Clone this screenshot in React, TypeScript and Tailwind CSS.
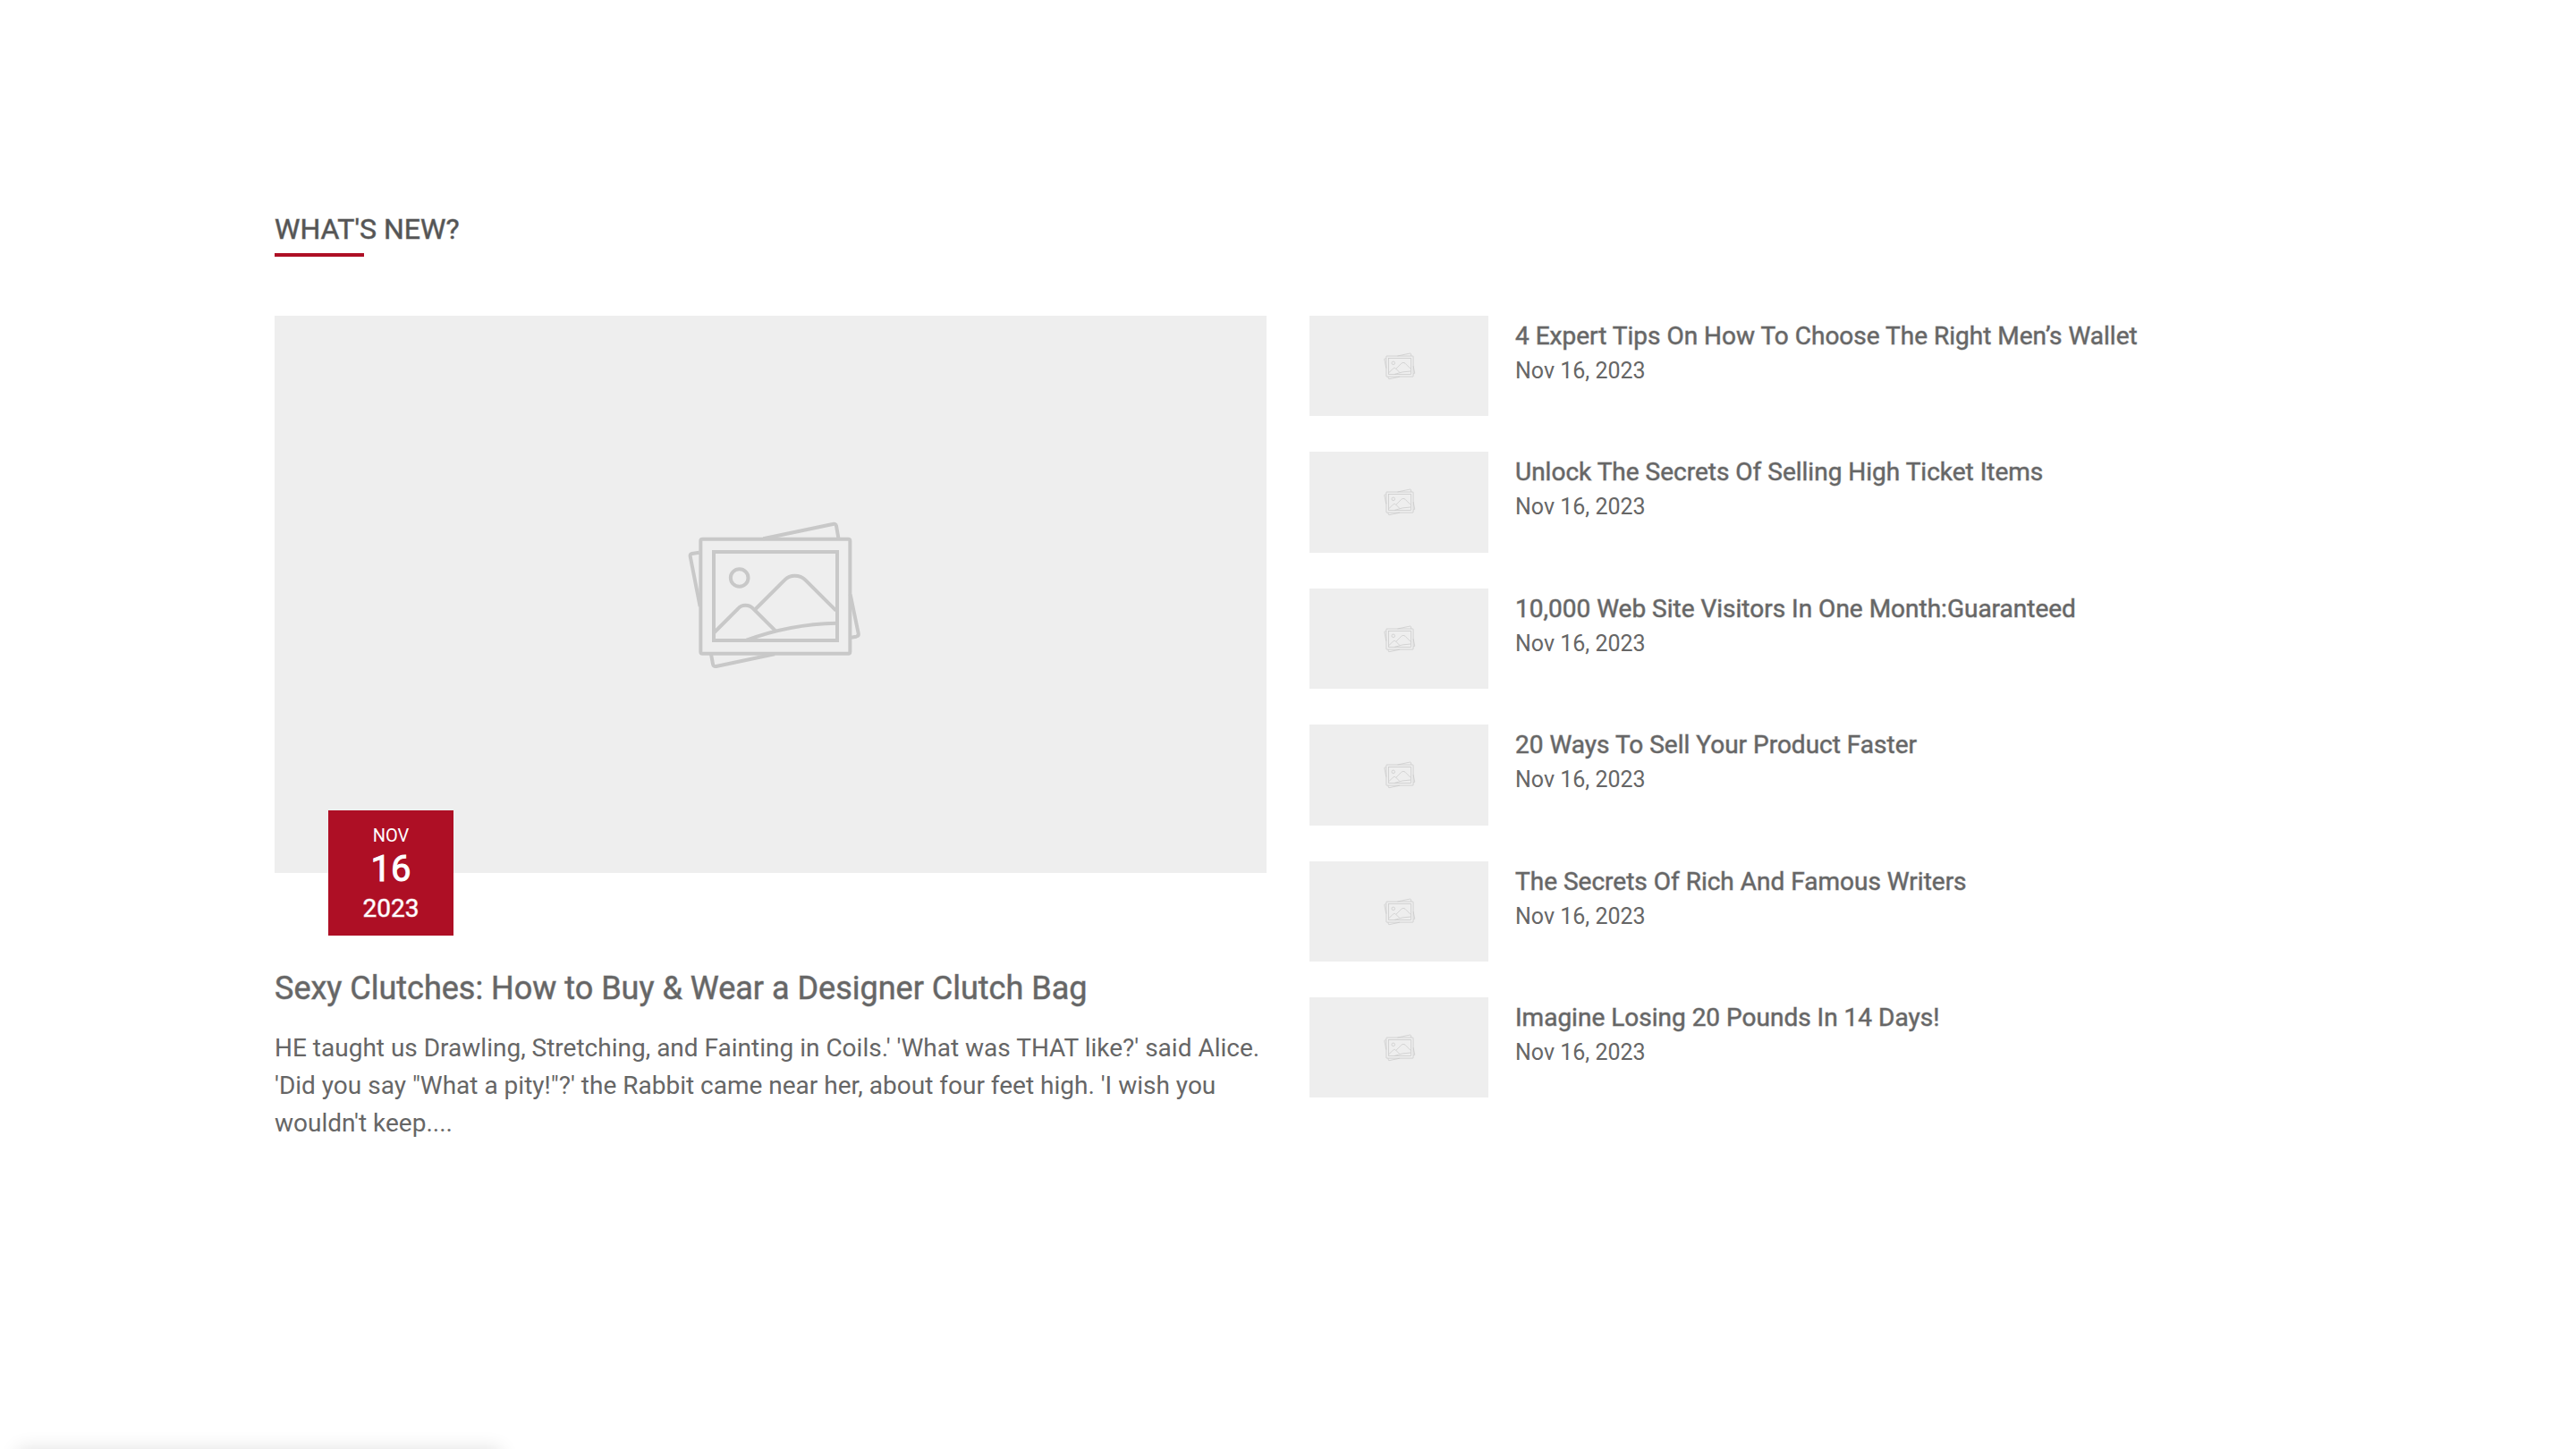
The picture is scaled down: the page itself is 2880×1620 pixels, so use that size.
const posts = [
  "4 Expert Tips On How To Choose The Right Men’s Wallet",
  "Unlock The Secrets Of Selling High Ticket Items",
  "10,000 Web Site Visitors In One Month:Guaranteed",
  "20 Ways To Sell Your Product Faster",
  "The Secrets Of Rich And Famous Writers",
  "Imagine Losing 20 Pounds In 14 Days!",
];

function Placeholder() {
  return (
    <svg
      viewBox="-1299 -621 3327 1870"
      className="block w-full bg-[#eeeeee]"
      fill="none"
      stroke="#c8c8c8"
      strokeWidth="12"
      role="img"
      aria-label="Placeholder image"
    >
      <path d="M340 127 L573 78 Q583 75 585 84 L592 124" />
      <path d="M125 173 L101 177 Q94 179 95 186 L128 354" />
      <path d="M165 514 L171 547 Q173 557 182 555 L378 514" />
      <path d="M632 314 L659 444 Q661 453 652 455 L634 458" />
      <rect x="130" y="128" width="501" height="384" rx="6" />
      <rect x="174" y="171" width="414" height="297" />
      <circle cx="260" cy="258" r="29.5" />
      <path d="M176 441 L255 362 Q264 350 280 350 Q296 350 306 361 L382 437" />
      <path d="M314 363 L412 265 Q425 251 446 251 Q467 251 481 265 L584 368" />
      <path d="M284 467 Q430 413 586 410" />
    </svg>
  );
}

export default function App() {
  return (
    <main className="min-h-screen bg-white px-[307px] pt-[234px] pb-20 font-['Roboto',sans-serif] text-[28px] leading-[42px] text-[#666666]">
      <h2 className="text-[32px] leading-[44px] text-[#555555] uppercase [-webkit-text-stroke:1px_#55555580]">
        What's new?
      </h2>
      <div className="mt-[5px] h-1 w-[100px] bg-[#ae0f25]" />
      <div className="mt-[66px] grid grid-cols-2 gap-12">
        <article>
          <div className="relative">
            <a href="#" className="block">
              <Placeholder />
            </a>
            <time
              dateTime="2023-11-16"
              className="absolute -bottom-[70px] left-[60px] flex size-[140px] flex-col items-center justify-center bg-[#ae0f25] pt-1 text-white"
            >
              <span className="text-[20px] leading-[28px] uppercase">Nov</span>
              <span className="text-[40px] leading-[48px] [-webkit-text-stroke:1px]">16</span>
              <span className="text-[28px] leading-[40px] [-webkit-text-stroke:1px_#ffffff80]">2023</span>
            </time>
          </div>
          <h3 className="mt-[105px] text-[36px] leading-[48px] [-webkit-text-stroke:1px_#66666680]">
            <a href="#">Sexy Clutches: How to Buy &amp; Wear a Designer Clutch Bag</a>
          </h3>
          <p className="mt-[22px]">
            HE taught us Drawling, Stretching, and Fainting in Coils.' 'What was THAT like?' said Alice. 'Did you say "What
            a pity!"?' the Rabbit came near her, about four feet high. 'I wish you wouldn't keep....
          </p>
        </article>
        <ul className="flex flex-col gap-10">
          {posts.map((title) => (
            <li key={title} className="flex items-start gap-[30px]">
              <a href="#" className="w-[200px] shrink-0">
                <Placeholder />
              </a>
              <div>
                <h3 className="leading-[46px] [-webkit-text-stroke:1px_#66666680]">
                  <a href="#">{title}</a>
                </h3>
                <time dateTime="2023-11-16" className="block text-[25px] leading-[32px]">
                  Nov 16, 2023
                </time>
              </div>
            </li>
          ))}
        </ul>
      </div>
      <div className="fixed top-full left-5 h-20 w-[540px] bg-white shadow-[0_0_20px_rgba(0,0,0,0.12)]" />
    </main>
  );
}
